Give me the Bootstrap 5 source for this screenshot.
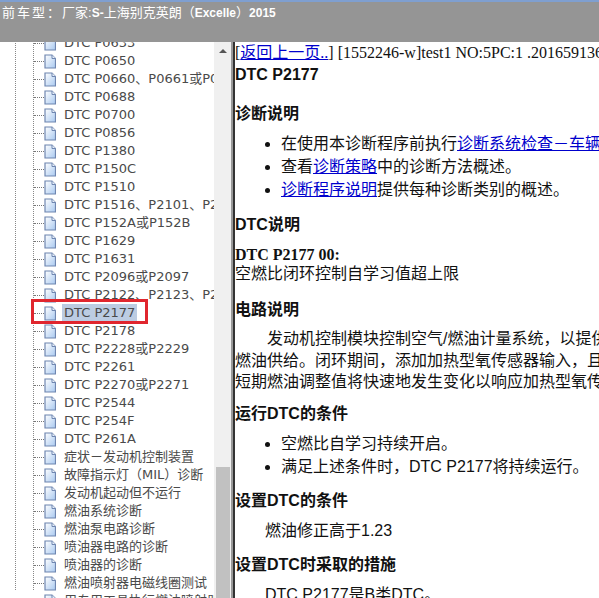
<!DOCTYPE html>
<html lang="zh"><head><meta charset="utf-8"><title>DTC P2177</title>
<link href="https://cdn.jsdelivr.net/npm/bootstrap@5.3.0/dist/css/bootstrap.min.css" rel="stylesheet">
<style>
html,body{height:100%;overflow:hidden;background:#fff}
.app-shell{height:598px;width:599px;position:relative;overflow:hidden}
.top-bar{height:42px;flex:none;background:#959595;border-top:2px solid #7f9fd0;color:#fff;font:13px/20px "Liberation Sans","Noto Sans CJK SC",sans-serif;white-space:nowrap;padding-top:1px}
.top-line{margin-left:-13px;display:block}
.top-lead{letter-spacing:2px}
.top-lat{font-size:12px;font-weight:700}
.tree-col{width:214px;flex:none;overflow:hidden}
.guide-a{margin-left:15px;border-left:1px dotted #888;height:100%}
.guide-b{margin-left:17px;border-left:1px dotted #888;height:100%}
.tree-list{margin-top:-8px;font:13px/18px "DejaVu Sans","Noto Sans CJK SC",sans-serif;color:#4a4a4a;list-style:none;padding:0}
.tree-row{height:18px;white-space:nowrap;display:flex;align-items:center}
.tree-row::before{content:"";width:10px;flex:none;border-top:1px dotted #777}
.tree-row svg{width:12px;height:15px;flex:none;margin-right:8px}
.tree-sel{background:#bcccE2;margin-left:-2px;padding:0 2px;line-height:18px}
.scroll-col{width:17px;flex:none;background:#f0f0f0;padding-top:7px}
.scroll-up{width:0;height:0;border:4px solid transparent;border-bottom:4px solid #555;border-top:0;margin:0 auto}
.scroll-thumb{height:131px;background:#c1c1c1;margin:0 1px 0 2px}
.split-line{width:4px;flex:none;background:#fff;border-right:2px solid #333;border-left:2px solid #999}
.doc-col{flex:1;min-width:0;overflow:hidden;font:16px/22px "Liberation Serif","Noto Sans CJK SC",serif;color:#111;white-space:nowrap}
.doc-col a{color:#0000cc;text-decoration:underline}
.doc-title{font:700 16px/22px "Liberation Sans","Noto Sans CJK SC",sans-serif;margin:0}
.doc-head{font:700 16px/22px "Liberation Sans","Noto Sans CJK SC",sans-serif;margin:0}
.doc-list{margin:0;padding-left:46px;font-family:"Liberation Sans","Noto Sans CJK SC",sans-serif;line-height:23px}
.doc-text{margin:0;font-family:"Liberation Sans","Noto Sans CJK SC",sans-serif}
.doc-para{line-height:21.7px}
.doc-dent{padding-left:30px}
.gap-a{margin-top:17px}.gap-b{margin-top:12px}.gap-c{margin-top:8px}.gap-d{margin-top:14px}.gap-e{margin-top:7px}.gap-f{margin-top:10px}.gap-g{margin-top:13px}.gap-h{margin-top:10px}
.doc-code{font-weight:700;font-family:"Liberation Serif",serif;line-height:17px}
.red-mark{position:absolute;left:31px;top:299px;width:117px;height:25px;border:3px solid #e0262e}
</style></head>
<body>
<svg width="0" height="0" class="d-block position-absolute"><defs>
<linearGradient id="pg" x1="0" y1="0" x2="1" y2="1"><stop offset="0" stop-color="#fff"/><stop offset="1" stop-color="#a9c9f0"/></linearGradient>
<symbol id="ic" viewBox="0 0 12 15"><path d="M1 1H8L11.500 4.500V14H1Z" fill="url(#pg)" stroke="#6f86b0" stroke-width="1.200"/><path d="M8 1V4.500H11.500" fill="#e8f0fa" stroke="#6f86b0"/></symbol>
</defs></svg>
<div class="app-shell d-flex flex-column">
<div class="top-bar"><span class="top-line"><span class="top-lead">当前车型：</span>厂家:<span class="top-lat">S-</span>上海别克英朗（<span class="top-lat">Excelle</span>）<span class="top-lat">2015</span></span></div>
<div class="d-flex flex-grow-1" style="min-height:0">
<div class="tree-col"><div class="guide-a"><div class="guide-b"><ul class="tree-list">
<li class="tree-row"><svg><use href="#ic"/></svg>DTC P0633</li>
<li class="tree-row"><svg><use href="#ic"/></svg>DTC P0650</li>
<li class="tree-row"><svg><use href="#ic"/></svg>DTC P0660、P0661或P0662</li>
<li class="tree-row"><svg><use href="#ic"/></svg>DTC P0688</li>
<li class="tree-row"><svg><use href="#ic"/></svg>DTC P0700</li>
<li class="tree-row"><svg><use href="#ic"/></svg>DTC P0856</li>
<li class="tree-row"><svg><use href="#ic"/></svg>DTC P1380</li>
<li class="tree-row"><svg><use href="#ic"/></svg>DTC P150C</li>
<li class="tree-row"><svg><use href="#ic"/></svg>DTC P1510</li>
<li class="tree-row"><svg><use href="#ic"/></svg>DTC P1516、P2101、P2119</li>
<li class="tree-row"><svg><use href="#ic"/></svg>DTC P152A或P152B</li>
<li class="tree-row"><svg><use href="#ic"/></svg>DTC P1629</li>
<li class="tree-row"><svg><use href="#ic"/></svg>DTC P1631</li>
<li class="tree-row"><svg><use href="#ic"/></svg>DTC P2096或P2097</li>
<li class="tree-row"><svg><use href="#ic"/></svg>DTC P2122、P2123、P2127</li>
<li class="tree-row"><svg><use href="#ic"/></svg><span class="tree-sel">DTC P2177</span></li>
<li class="tree-row"><svg><use href="#ic"/></svg>DTC P2178</li>
<li class="tree-row"><svg><use href="#ic"/></svg>DTC P2228或P2229</li>
<li class="tree-row"><svg><use href="#ic"/></svg>DTC P2261</li>
<li class="tree-row"><svg><use href="#ic"/></svg>DTC P2270或P2271</li>
<li class="tree-row"><svg><use href="#ic"/></svg>DTC P2544</li>
<li class="tree-row"><svg><use href="#ic"/></svg>DTC P254F</li>
<li class="tree-row"><svg><use href="#ic"/></svg>DTC P261A</li>
<li class="tree-row"><svg><use href="#ic"/></svg>症状－发动机控制装置</li>
<li class="tree-row"><svg><use href="#ic"/></svg>故障指示灯（MIL）诊断</li>
<li class="tree-row"><svg><use href="#ic"/></svg>发动机起动但不运行</li>
<li class="tree-row"><svg><use href="#ic"/></svg>燃油系统诊断</li>
<li class="tree-row"><svg><use href="#ic"/></svg>燃油泵电路诊断</li>
<li class="tree-row"><svg><use href="#ic"/></svg>喷油器电路的诊断</li>
<li class="tree-row"><svg><use href="#ic"/></svg>喷油器的诊断</li>
<li class="tree-row"><svg><use href="#ic"/></svg>燃油喷射器电磁线圈测试</li>
<li class="tree-row"><svg><use href="#ic"/></svg>用专用工具执行燃油喷射器</li>
</ul></div></div></div>
<div class="scroll-col d-flex flex-column"><div class="scroll-up"></div><div class="scroll-thumb mt-auto"></div></div>
<div class="split-line"></div>
<div class="doc-col">
<div>[<a href="#">返回上一页..</a>] [1552246-w]test1 NO:5PC:1 .201659136</div>
<h1 class="doc-title">DTC P2177</h1>
<h2 class="doc-head gap-a">诊断说明</h2>
<ul class="doc-list gap-e">
<li>在使用本诊断程序前执行<a href="#">诊断系统检查－车辆</a></li>
<li>查看<a href="#">诊断策略</a>中的诊断方法概述。</li>
<li><a href="#">诊断程序说明</a>提供每种诊断类别的概述。</li>
</ul>
<h2 class="doc-head gap-g">DTC说明</h2>
<p class="doc-code gap-f mb-0">DTC P2177 00:</p>
<p class="doc-text">空燃比闭环控制自学习值超上限</p>
<h2 class="doc-head gap-d">电路说明</h2>
<p class="doc-text doc-para gap-e">　　发动机控制模块控制空气/燃油计量系统，以提供<br>燃油供给。闭环期间，添加加热型氧传感器输入，且<br>短期燃油调整值将快速地发生变化以响应加热型氧传</p>
<h2 class="doc-head gap-h">运行DTC的条件</h2>
<ul class="doc-list gap-e">
<li>空燃比自学习持续开启。</li>
<li>满足上述条件时，DTC P2177将持续运行。</li>
</ul>
<h2 class="doc-head gap-b">设置DTC的条件</h2>
<p class="doc-text doc-dent gap-c">燃油修正高于1.23</p>
<h2 class="doc-head gap-b">设置DTC时采取的措施</h2>
<p class="doc-text doc-dent gap-c">DTC P2177是B类DTC。</p>
</div>
</div>
<div class="red-mark"></div>
</div>
<script src="https://cdn.jsdelivr.net/npm/bootstrap@5.3.0/dist/js/bootstrap.bundle.min.js"></script>
</body></html>
